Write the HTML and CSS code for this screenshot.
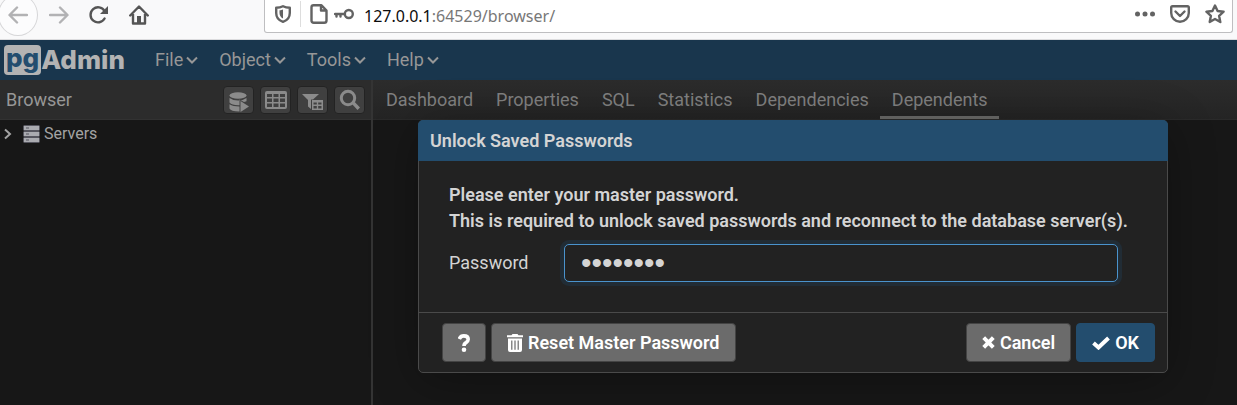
FILE: index.html
```html
<!DOCTYPE html>
<html lang="en">
<head>
<meta charset="utf-8">
<title>pgAdmin 4</title>
<link rel="stylesheet" href="styles.css">
</head>
<body>
<div class="chrome">
  <div class="chrome-nav">
    <button class="chrome-btn back" aria-label="Back"><svg width="20" height="18" viewBox="0 0 20 18"><path d="M19 9H2M9 1.500L1.500 9L9 16.500"/></svg></button>
    <button class="chrome-btn forward" aria-label="Forward"><svg width="20" height="18" viewBox="0 0 20 18"><path d="M1 9H18M11 1.500L18.500 9L11 16.500"/></svg></button>
    <button class="chrome-btn reload" aria-label="Reload"><svg width="20" height="20" viewBox="0 0 20 20"><path d="M15.600 13.500A7.500 7.500 0 1 1 15.500 6"/><path class="solid" d="M19 1V9H11Z"/></svg></button>
    <button class="chrome-btn home" aria-label="Home"><svg width="20" height="20" viewBox="0 0 20 20"><path d="M1.200 10.500L10 1.500L18.800 10.500M4 9V18.500H16V9"/><path class="solid" d="M8 11H12V18H8Z"/></svg></button>
  </div>
  <div class="urlbar">
    <svg class="shield" width="16" height="18" viewBox="0 0 16 18"><path d="M8 1.200C10 2.200 12.500 2.700 14.800 2.700V8C14.800 12 12 15.500 8 16.800C4 15.500 1.200 12 1.200 8V2.700C3.500 2.700 6 2.200 8 1.200Z"/><path class="solid" d="M8 4.500V13.500C5.500 12.300 4.500 10 4.500 8V5.300C6 5.300 7 5 8 4.500Z"/></svg>
    <span class="url-divider"></span>
    <svg width="18" height="20" viewBox="0 0 18 20"><path d="M3.500 1.200H11.500L16.500 6.500V16.500Q16.500 18.800 14.200 18.800H3.800Q1.500 18.800 1.500 16.500V3.200Q1.500 1.200 3.500 1.200ZM11 1.500V6.500H16"/></svg>
    <svg class="key" width="20" height="12" viewBox="0 0 20 12"><circle cx="14.800" cy="6" r="4"/><path d="M11 6H1M2.500 6V8.500M6.500 6V8.500"/></svg>
    <span class="url"><b>127.0.0.1</b>:64529/browser/</span>
    <span class="url-actions">
      <svg width="20" height="6" viewBox="0 0 20 6"><g class="solid"><circle cx="2.500" cy="3" r="2.500"/><circle cx="10" cy="3" r="2.500"/><circle cx="17.500" cy="3" r="2.500"/></g></svg>
      <svg width="20" height="18" viewBox="0 0 20 18"><path d="M2.500 1.200H17.500Q18.800 1.200 18.800 2.500V8A8.800 8.800 0 0 1 1.200 8V2.500Q1.200 1.200 2.500 1.200ZM5.500 6.500L10 11L14.500 6.500"/></svg>
      <svg width="20" height="20" viewBox="0 0 20 20"><path d="M10 1.500L12.600 7L18.600 7.700L14.100 11.800L15.300 18L10 15L4.700 18L5.900 11.800L1.400 7.700L7.400 7Z"/></svg>
    </span>
  </div>
</div>

<div class="app">
  <nav class="menubar">
    <span class="logo"><span class="logo-pg">pg</span><span>Admin</span></span>
    <button>File<svg width="14" height="10" viewBox="0 0 14 10"><path d="M2 2.500L7 7.500L12 2.500"/></svg></button>
    <button>Object<svg width="14" height="10" viewBox="0 0 14 10"><path d="M2 2.500L7 7.500L12 2.500"/></svg></button>
    <button>Tools<svg width="14" height="10" viewBox="0 0 14 10"><path d="M2 2.500L7 7.500L12 2.500"/></svg></button>
    <button>Help<svg width="14" height="10" viewBox="0 0 14 10"><path d="M2 2.500L7 7.500L12 2.500"/></svg></button>
  </nav>

  <div class="panels">
    <aside class="sidebar">
      <header class="panel-head">
        <span>Browser</span>
        <div class="tools">
          <button aria-label="Query tool"><svg class="low" width="20" height="20" viewBox="0 0 20 20"><ellipse cx="9" cy="3.500" rx="8.500" ry="3.300"/><path d="M.5 6Q4 8.500 9 8.500T17.500 6V9.200L15 10L10.500 7.500V13.200Q3 13.500 .5 10.500ZM.5 12.300Q4 14.500 10.500 14.500V19.400Q2 19.500 .5 16.500ZM11.500 9L20 14.500L11.500 20Z"/></svg></button>
          <button aria-label="View data"><svg width="22" height="18" viewBox="0 0 22 18"><path fill-rule="evenodd" d="M2 0H20Q22 0 22 2V16Q22 18 20 18H2Q0 18 0 16V2Q0 0 2 0ZM2 3V6H7V3ZM8.500 3V6H13.500V3ZM15 3V6H20V3ZM2 7.500V11H7V7.500ZM8.500 7.500V11H13.500V7.500ZM15 7.500V11H20V7.500ZM2 12.500V16H7V12.500ZM8.500 12.500V16H13.500V12.500ZM15 12.500V16H20V12.500Z"/></svg></button>
          <button aria-label="Filtered rows"><svg class="low" width="22" height="18" viewBox="0 0 22 18"><path fill-rule="evenodd" d="M0 1H17L11 6.500H9V16L6 13.500V7ZM10 7H21V17H10ZM11.500 9.500V11.500H14.800V9.500ZM16.200 9.500V11.500H19.500V9.500ZM11.500 13V15.500H14.800V13ZM16.200 13V15.500H19.500V13Z"/></svg></button>
          <button aria-label="Search"><svg width="22" height="22" viewBox="0 0 22 22"><circle cx="9" cy="9" r="6.700" fill="none" stroke="currentColor" stroke-width="3"/><path d="M13 15L15.500 12.800L21 18.500L18.500 21Z"/></svg></button>
        </div>
      </header>
      <div class="tree-item">
        <svg width="8" height="12" viewBox="0 0 8 12"><path d="M1 1.500L6 6L1 10.500" fill="none" stroke="currentColor" stroke-width="2"/></svg>
        <svg width="17" height="18" viewBox="0 0 17 18"><g fill="#aaabb0" stroke="#55555e"><rect x=".5" y=".5" width="16" height="5" rx="1"/><rect x=".5" y="6.500" width="16" height="5" rx="1"/><rect x=".5" y="12.500" width="16" height="5" rx="1"/><path d="M3 3H6M3 9H6M3 15H6"/></g></svg>
        <span>Servers</span>
      </div>
    </aside>
    <main class="content">
      <nav class="panel-head tabs">
        <button>Dashboard</button>
        <button>Properties</button>
        <button>SQL</button>
        <button>Statistics</button>
        <button>Dependencies</button>
        <button class="active">Dependents</button>
      </nav>
    </main>
  </div>

  <form class="dialog" role="dialog" aria-labelledby="dialog-title">
    <h1 id="dialog-title">Unlock Saved Passwords</h1>
    <div class="dialog-body">
      <p>Please enter your master password.<br>This is required to unlock saved passwords and reconnect to the database server(s).</p>
      <div class="field">
        <label for="password">Password</label>
        <input id="password" type="password" value="password">
      </div>
    </div>
    <footer>
      <button type="button" class="help" aria-label="Help"><svg width="12" height="18" viewBox="0 0 12 18"><path d="M1.300 5Q2.500 1.900 5.800 1.900Q10.200 1.900 10.200 5.300Q10.200 7.300 8 8.600Q6 9.700 6 12" fill="none" stroke="currentColor" stroke-width="3.600"/><circle cx="6" cy="15.700" r="2.300"/></svg></button>
      <button type="button"><svg width="16" height="18" viewBox="0 0 16 18"><path fill-rule="evenodd" d="M0 1.200H4.500L5.500 0H10.500L11.500 1.200H16V3.200H0ZM1 4.500H15V16Q15 18 13 18H3Q1 18 1 16ZM4.200 6.500V15.800H5.400V6.500ZM7.400 6.500V15.800H8.600V6.500ZM10.600 6.500V15.800H11.800V6.500Z"/></svg>Reset Master Password</button>
      <span class="spacer"></span>
      <button type="button"><svg width="13" height="13" viewBox="0 0 13 13"><path d="M1.700 1.700L11.300 11.300M11.300 1.700L1.700 11.300" stroke="currentColor" stroke-width="4"/></svg>Cancel</button>
      <button type="submit" class="primary"><svg width="18" height="14" viewBox="0 0 18 14"><path d="M1.500 7L6.500 11.500L16.500 2" fill="none" stroke="currentColor" stroke-width="4"/></svg>OK</button>
    </footer>
  </form>
</div>
</body>
</html>
```
FILE: styles.css
```css
* { box-sizing: border-box; }

body {
  margin: 0;
  min-height: 100vh;
  display: flex;
  flex-direction: column;
  overflow: hidden;
  background: #171717;
  font: 18px/26px Roboto, sans-serif;
}

button {
  font: inherit;
  color: inherit;
  background: none;
  border: 0;
  padding: 0;
}

svg { flex: none; }

/* Browser toolbar */
.chrome {
  height: 40px;
  display: flex;
  align-items: flex-start;
  background: #f9f9fa;
  border-bottom: 1px solid #dcdcde;
  overflow: hidden;
}

.chrome-nav {
  width: 264px;
  height: 29px;
  display: flex;
  align-items: center;
  gap: 20px;
}

.chrome svg {
  fill: none;
  stroke: #555;
  stroke-width: 2.4;
  stroke-linejoin: round;
  stroke-linecap: round;
}

.chrome svg .solid { fill: #555; stroke: none; }

.chrome-btn { display: flex; }

.chrome .back {
  width: 40px;
  height: 42px;
  margin-left: -2px;
  align-items: center;
  justify-content: center;
  border: 1px solid #d6d6d8;
  border-radius: 50%;
  background: #fcfcfd;
}

.back { margin-right: -9px; }
.chrome .back svg, .chrome .forward svg { stroke: #b2b2b4; }

.urlbar {
  flex: 1;
  height: 33px;
  margin-right: 4px;
  padding: 0 7px 4px 10px;
  display: flex;
  align-items: center;
  background: #fff;
  border: 1px solid #bebec0;
  border-top: 0;
  border-radius: 0 0 3px 3px;
}

.chrome .urlbar svg { stroke: #636363; }
.chrome .urlbar .solid { fill: #636363; }

.url-divider {
  width: 1px;
  height: 26px;
  margin: 0 9px;
  background: #ddd;
}

.key { margin-left: 6px; }

.url {
  margin-left: 10px;
  padding-top: 4px;
  color: #777;
  font: 16px/24px "Noto Sans", sans-serif;
}

.url b { font-weight: 400; color: #0c0c0d; }

.url-actions {
  margin-left: auto;
  display: flex;
  align-items: center;
  gap: 15px;
}

/* Application */
.app {
  position: relative;
  flex: 1;
  display: flex;
  flex-direction: column;
  color: #979797;
}

.menubar {
  height: 40px;
  padding-left: 4px;
  display: flex;
  align-items: center;
  gap: 20px;
  background: #19364d;
}

.menubar button {
  display: flex;
  align-items: center;
  gap: 2px;
}

.menubar button svg {
  fill: none;
  stroke: currentColor;
  stroke-width: 2;
}

.logo {
  display: flex;
  align-items: center;
  margin-right: 10px;
  color: #b3b3b3;
  font: 800 26px/30px Inter, sans-serif;
}

.logo-pg {
  height: 30px;
  padding: 0 2px;
  border-radius: 4px;
  background: #b3b3b3;
  color: #234d6e;
  line-height: 26px;
}

.panels { flex: 1; display: flex; }

.sidebar {
  width: 373px;
  border-right: 2px solid #343434;
}

.content { flex: 1; }

.panel-head {
  height: 40px;
  display: flex;
  align-items: center;
  background: #2c2c2c;
  border-bottom: 1px solid #323232;
}

.sidebar .panel-head {
  padding: 0 6px;
  justify-content: space-between;
}

.tools { display: flex; gap: 6px; }

.tools button {
  width: 31px;
  height: 28px;
  display: grid;
  place-items: center;
  border: 1px solid #232323;
  border-radius: 4px;
  background: #404040;
  color: #8b8b8b;
}

.tools svg { fill: currentColor; }
.tools .low { margin-top: 4px; }

.tree-item {
  height: 27px;
  padding-left: 4px;
  display: flex;
  align-items: center;
  color: #a3a3a3;
  font-size: 16px;
}

.tree-item svg + svg { margin: 0 4px 0 11px; }

.tabs {
  padding-left: 1px;
  background: linear-gradient(#2c2c2c, #242424);
  border-bottom-color: #2a2a2a;
}

.tabs button {
  height: 38px;
  padding: 3px 11px 0 12px;
  border-bottom: 3px solid transparent;
  color: #808080;
}

.tabs .active { border-bottom-color: #6b6b69; }

/* Dialog */
.dialog {
  position: absolute;
  top: 80px;
  left: 418px;
  width: 750px;
  border: 1px solid #4a4a4a;
  border-radius: 5px;
  background: #222;
  color: #d4d4d4;
  box-shadow: 0 8px 48px rgba(0, 0, 0, .3);
}

.dialog h1 {
  margin: -1px -1px 0;
  padding: 0 12px;
  border-radius: 5px 5px 0 0;
  background: #234d6e;
  font-size: 18px;
  font-weight: 600;
  line-height: 41px;
}

.dialog-body { padding: 21px 30px 30px; }

.dialog p { margin: 0 0 10px; font-weight: 600; }

.field {
  display: flex;
  align-items: center;
  padding-right: 19px;
}

.field label { width: 115px; }

.field input {
  flex: 1;
  min-width: 0;
  height: 38px;
  padding: 0 16px;
  border: 1px solid #4a93cd;
  border-radius: 5px;
  outline: 0;
  background: #222;
  color: #d4d4d4;
  font: 30px "Liberation Sans", sans-serif;
  box-shadow: 0 0 0 4px #212c35;
}

.dialog footer {
  display: flex;
  gap: 5px;
  padding: 10px 12px 10px 23px;
  border-top: 1px solid #4a4a4a;
}

.dialog footer button {
  height: 39px;
  padding: 0 15px;
  display: flex;
  align-items: center;
  gap: 5px;
  border: 1px solid #444;
  border-radius: 4px;
  background: #6b6b6b;
  color: #fff;
  font-weight: 600;
}

.dialog footer svg { fill: currentColor; }

.dialog footer .primary { background: #234d6e; border-color: #234d6e; }

.spacer { flex: 1; }
```
